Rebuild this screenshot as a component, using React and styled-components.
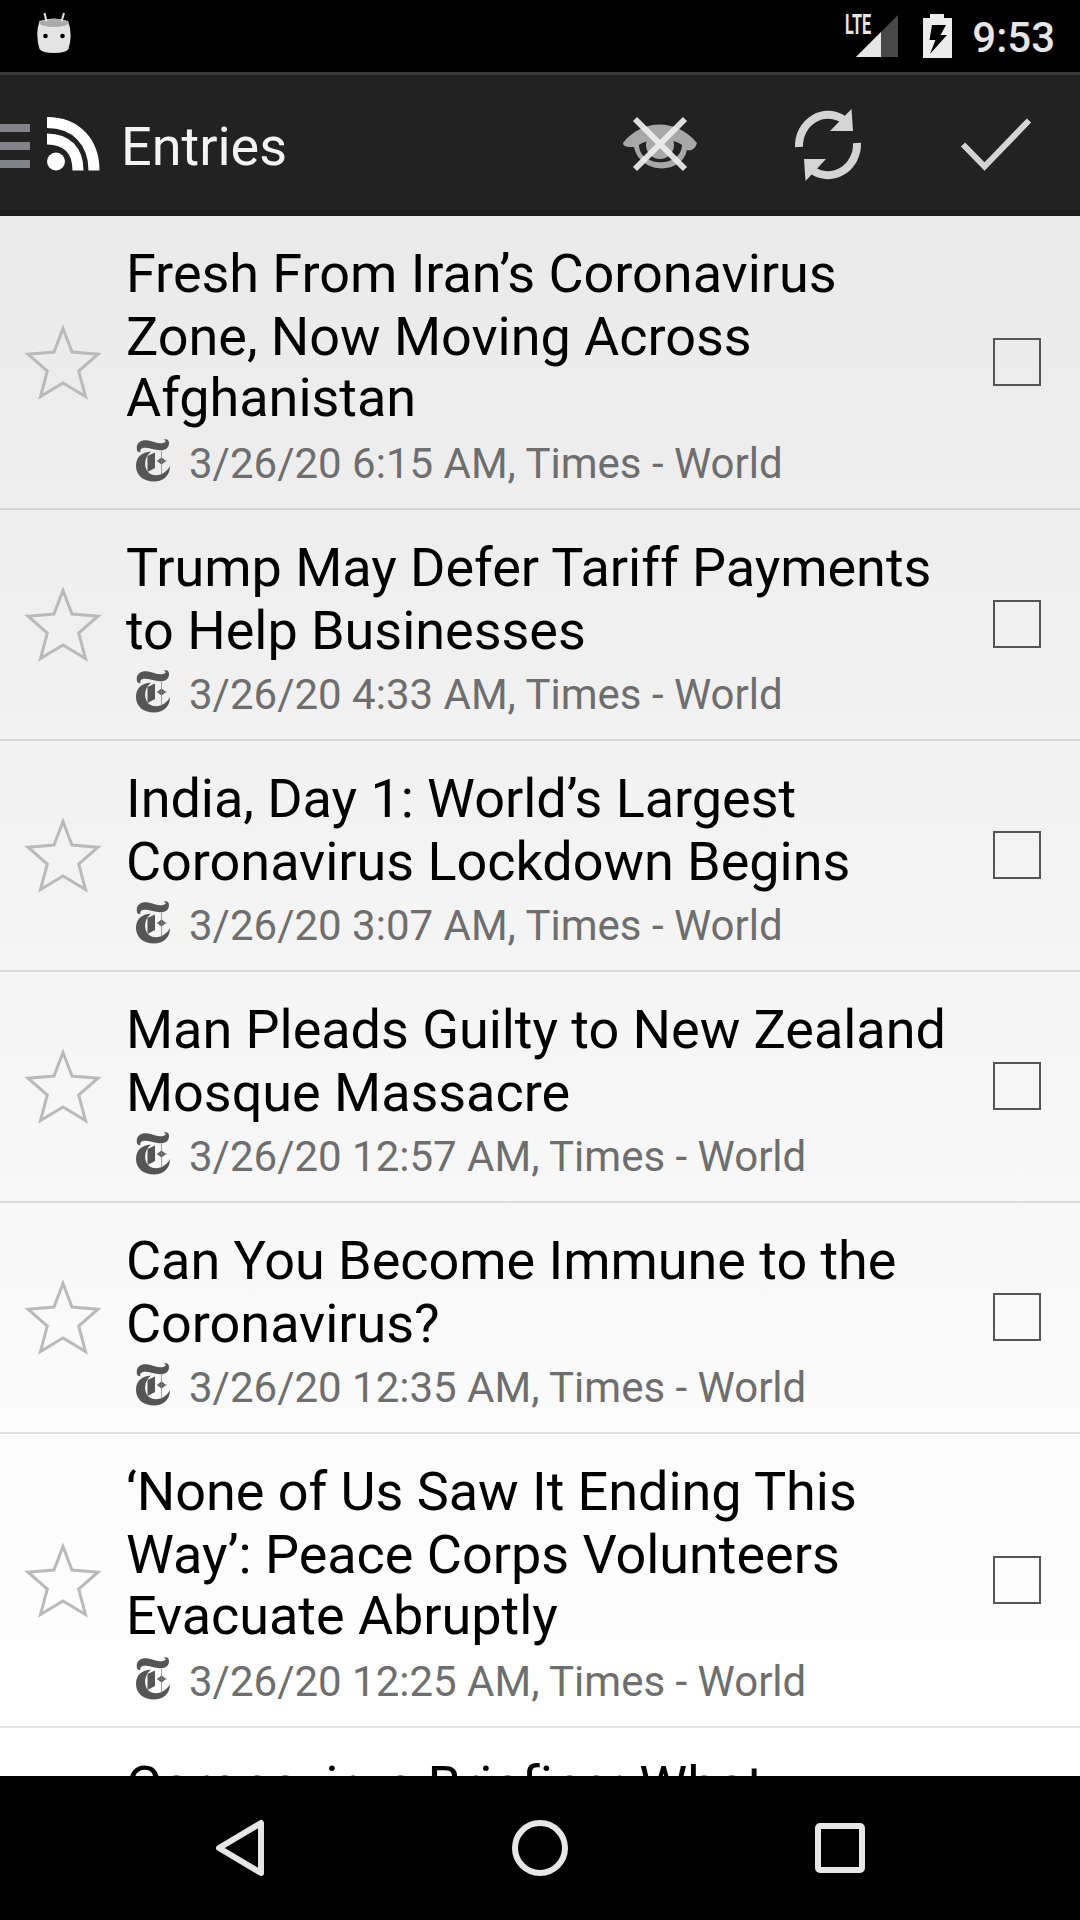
import React from "react";
import styled, { createGlobalStyle } from "styled-components";

const Global = createGlobalStyle`
  * { box-sizing: border-box; }
  body { margin: 0; background: #000; font-family: Roboto, sans-serif; }
`;
const Screen = styled.div`
  width: 1080px; height: 1920px; display: flex; flex-direction: column; overflow: hidden; background: #000;
`;
const StatusBar = styled.header`
  height: 72px; flex: none; display: flex; align-items: center; justify-content: space-between;
  color: #e6e6e6; padding: 0 25px 6px 36px;
`;
const StatusGroup = styled.div` display: flex; align-items: center; height: 72px; padding-top: 6px; `;
const Signal = styled.div` display: flex; align-items: flex-start; height: 44px; margin-right: 25px; `;
const Network = styled.span`
  font: 700 27px/23px Roboto, sans-serif; transform: scaleX(.6);
  transform-origin: left; width: 11px; white-space: nowrap;
`;
const Clock = styled.time` font-size: 42px; line-height: 50px; font-weight: 500; margin: 3px 0 0 20px; `;
const ActionBar = styled.nav`
  height: 144px; flex: none; display: flex; align-items: center; background: #222;
  border-top: 3px solid #393939; border-bottom: 6px solid #1b1b1b; padding-top: 5px;
`;
const Title = styled.h1`
  flex: 1; margin: 3px 0 0 19px; font-size: 54px; line-height: 64px; font-weight: 400; color: #f3f3f3;
`;
const Action = styled.button`
  width: 168px; height: 130px; padding: 0; border: 0; background: none; display: grid; place-items: center;
`;
const Feed = styled.main`
  height: 1560px; flex: none; overflow: hidden; background: linear-gradient(#eaeaea, #fff 96%);
`;
const Entry = styled.article`
  height: ${p => (p.$lines === 3 ? 294 : 231)}px; display: flex; align-items: center;
  padding-bottom: ${p => (p.$lines === 3 ? 0 : 1)}px;
  border-bottom: 2px solid rgba(0,0,0,.11);
`;
const StarSlot = styled.div` width: 126px; height: 78px; flex: none; padding-left: 24px; `;
const Body = styled.div` flex: 1; height: 100%; padding-top: 26px; `;
const Headline = styled.h2`
  margin: 0; font-size: 54px; line-height: 63px; font-weight: 400; color: #000; white-space: nowrap;
  letter-spacing: -0.04px; height: ${p => p.$lines * 63}px;
`;
const Line = styled.span` display: block; height: ${p => (p.$index === 1 ? 61 : 63)}px; `;
const Meta = styled.div`
  height: 50px; display: flex; align-items: center; font-size: 42px; line-height: 50px; color: #6e6e6e; white-space: nowrap;
  padding-left: 10px; margin-top: 5px;
`;
const MetaText = styled.span` margin: 6px 0 0 17px; `;
const CheckBox = styled.div` width: 48px; height: 48px; flex: none; border: 2px solid #555; margin-right: 39px; `;
const NavBar = styled.footer`
  height: 144px; flex: none; background: #000; display: flex; justify-content: center;
`;
const NavButton = styled.button`
  width: 300px; height: 144px; padding: 0; border: 0; background: none; display: grid; place-items: center;
`;

const Star = () => (
  <svg width="78" height="78" viewBox="0 0 78 78" fill="none" stroke="#bababa" strokeWidth="3">
    <path d="M39 5.500L48 29L74 31.200L54.700 48L61.500 73.500L39 60L16.500 73.500L23.300 48L4 31.200L30 29Z" />
  </svg>
);
const TimesMark = () => (
  <svg width="36" height="44" viewBox="0 0 36 44">
    <g fill="#555">
      <path d="M1 11C-.5 4 5 .5 12 1.500C18 2.500 22 5 27 4C31 3 30 1 27 1C30-.5 33 0 33 4C33 10 28 12 22 11C16 10 8 7 5 10C3 12 6 14 3 13C2 13 1 12 1 11Z" />
      <path d="M15 12.500C7 19 8 30 13 34C20 39 30 35 34 27C34 37 27 42.500 18 42.500C7 42.500 0 36 0 27C0 18 6 13 15 12.500Z" />
      <path d="M11.500 17L19 13.500V29L11.500 33ZM21 22L25.500 18.500L30 22L25.500 25.500Z" />
    </g>
    <path stroke="#888" strokeWidth=".8" fill="none" d="M25.500 12V36M21 22H31" />
  </svg>
);
const Droid = () => (
  <svg width="36" height="42" viewBox="0 0 36 42">
    <path d="M3.500 9Q18 4 32 9Q37 22 32.500 37Q30 41 18 41Q6 41 3.500 37Q-1 22 3.500 9Z" fill="#e4e4e4" />
    <ellipse cx="18" cy="11" rx="14.500" ry="4" fill="#aaa" />
    <path d="M8.500 1L10.500 9.500M28 1L25.500 9.500" stroke="#e4e4e4" strokeWidth="2" />
    <circle cx="9.500" cy="24" r="2.300" /><circle cx="26.500" cy="24" r="2.300" />
  </svg>
);

const entries = [
  [["Fresh From Iran’s Coronavirus", "Zone, Now Moving Across", "Afghanistan"], "6:15 AM"],
  [["Trump May Defer Tariff Payments", "to Help Businesses"], "4:33 AM"],
  [["India, Day 1: World’s Largest", "Coronavirus Lockdown Begins"], "3:07 AM"],
  [["Man Pleads Guilty to New Zealand", "Mosque Massacre"], "12:57 AM"],
  [["Can You Become Immune to the", "Coronavirus?"], "12:35 AM"],
  [["‘None of Us Saw It Ending This", "Way’: Peace Corps Volunteers", "Evacuate Abruptly"], "12:25 AM"],
  [["Coronavirus Briefing: What"], ""],
];

export default function App() {
  return (
    <Screen>
      <Global />
      <StatusBar>
        <Droid />
        <StatusGroup>
          <Signal>
            <Network>LTE</Network>
            <svg width="42" height="44" viewBox="0 0 42 44">
              <path d="M0 43L42 1V43Z" fill="#484848" /><path d="M0 43L25 18V43Z" fill="#e6e6e6" />
            </svg>
          </Signal>
          <svg width="29" height="44" viewBox="0 0 29 44">
            <path fillRule="evenodd" fill="#ececec" d="M0 4H7V0H21V4H29V44H0ZM9 11L6.500 26H12.500L7 40L24 21H17.500L23 11Z" />
          </svg>
          <Clock>9:53</Clock>
        </StatusGroup>
      </StatusBar>
      <ActionBar>
        <svg width="102" height="64" viewBox="0 -2 102 64">
          <path fill="#828388" d="M0 9H30V17H0ZM0 27H30V35H0ZM0 45H30V53H0Z" />
          <circle cx="56" cy="46.500" r="9" fill="#fff" />
          <path d="M47 7.500C76 7.500 94 27 94 55.500M47 24C67 24 78 36 78 55.500" fill="none" stroke="#fff" strokeWidth="11" />
        </svg>
        <Title>Entries</Title>
        <Action>
          <svg width="80" height="60" viewBox="0 0 80 60">
            <path fillRule="evenodd" fill="#a8a8a8" d="M3 28C22 4 56 3 77 28C75 34 72 36 67 35C62 60 20 60 14 32C8 32 3 32 3 28ZM19 30C19 52 61 54 62 30C54 23 28 23 19 30Z" />
            <circle cx="40" cy="30" r="14" fill="#a8a8a8" />
            <path d="M15 4L65 54M65 4L15 54" stroke="#eee" strokeOpacity=".92" strokeWidth="6" />
          </svg>
        </Action>
        <Action>
          <svg width="72" height="76" viewBox="0 0 72 76">
            <g fill="#d4d4d4">
              <path d="M7 40A29 31 0 0 1 52 13" fill="none" stroke="#d4d4d4" strokeWidth="8" />
              <path d="M59.500 2L61 24H38Z" />
              <path d="M65 36A29 31 0 0 1 20 63" fill="none" stroke="#d4d4d4" strokeWidth="8" />
              <path d="M13.500 74L12 52H34Z" />
            </g>
          </svg>
        </Action>
        <Action>
          <svg width="76" height="60" viewBox="0 0 76 60" fill="none">
            <path d="M5 29.500L26.500 51.500L71 5.500" stroke="#d4d4d4" strokeWidth="6" />
          </svg>
        </Action>
      </ActionBar>
      <Feed>
        {entries.map(([lines, time]) => (
          <Entry key={lines[0]} $lines={lines.length}>
            <StarSlot>{time && <Star />}</StarSlot>
            <Body>
              <Headline $lines={lines.length}>
                {lines.map((line, i) => <Line key={line} $index={i}>{line}</Line>)}
              </Headline>
              {time && <Meta><TimesMark /><MetaText>3/26/20 {time}, Times - World</MetaText></Meta>}
            </Body>
            {time && <CheckBox />}
          </Entry>
        ))}
      </Feed>
      <NavBar>
        <NavButton>
          <svg width="60" height="60" viewBox="0 0 60 60" fill="none" stroke="#e6e6e6" strokeWidth="6" strokeLinejoin="round">
            <path d="M51 5V55L9 30Z" />
          </svg>
        </NavButton>
        <NavButton>
          <svg width="60" height="60" viewBox="0 0 60 60"><circle cx="30" cy="30" r="25" fill="none" stroke="#e6e6e6" strokeWidth="6" /></svg>
        </NavButton>
        <NavButton>
          <svg width="60" height="60" viewBox="0 0 60 60"><rect x="8" y="8" width="44" height="44" rx="2" fill="none" stroke="#e6e6e6" strokeWidth="6" /></svg>
        </NavButton>
      </NavBar>
    </Screen>
  );
}
